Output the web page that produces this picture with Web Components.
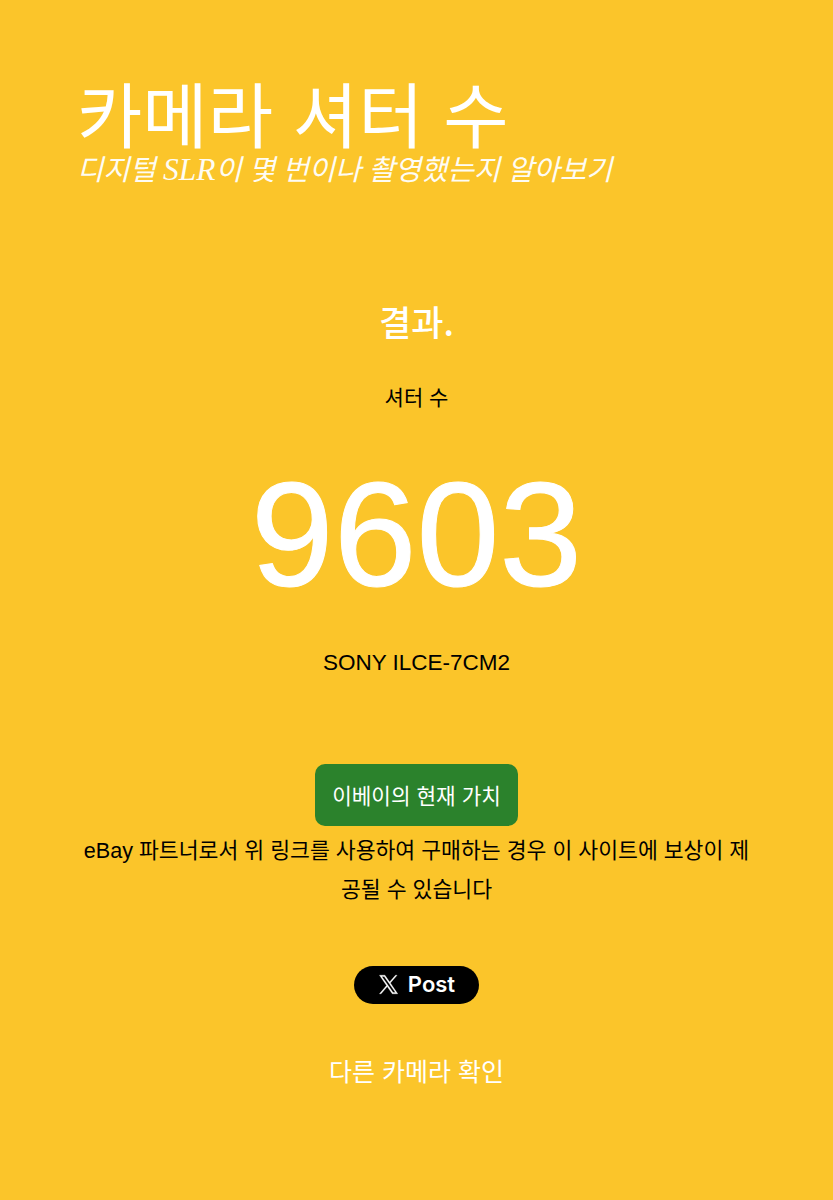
<!DOCTYPE html>
<html lang="ko">
<head>
<meta charset="utf-8">
<title>카메라 셔터 수</title>
<style>
  html, body { margin: 0; background: #fbc52a; }
  body { font-family: "Liberation Sans", "Noto Sans CJK KR", sans-serif; }
  .latin { font-size: 1.1em; }
</style>
</head>
<body>
<shutter-page>
  <site-header slot="header">
    <span slot="title">카메라 셔터 수</span>
    <span slot="tagline">디지털 <i class="latin">SLR</i>이 몇 번이나 촬영했는지 알아보기</span>
  </site-header>
  <result-panel count="9603" model="SONY ILCE-7CM2"></result-panel>
  <ebay-offer href="#">eBay 파트너로서 위 링크를 사용하여 구매하는 경우 이 사이트에 보상이 제공될 수 있습니다</ebay-offer>
  <post-button></post-button>
  <again-link>다른 카메라 확인</again-link>
</shutter-page>

<script>
class ShutterPage extends HTMLElement {
  constructor() {
    super();
    this.attachShadow({ mode: 'open' }).innerHTML = `
      <style>
        :host { display: block; height: 1200px; box-sizing: border-box; padding: 71px 78px 0; color: #000; overflow: hidden; }
      </style>
      <slot name="header"></slot>
      <slot></slot>`;
  }
}

class SiteHeader extends HTMLElement {
  constructor() {
    super();
    this.attachShadow({ mode: 'open' }).innerHTML = `
      <style>
        :host { display: block; color: #fff; }
        .title { font: 400 71px/80px "Noto Sans CJK KR", sans-serif; white-space: nowrap; margin-left: -1px; }
        .tagline { font: italic 400 28.6px/26px "Liberation Serif", "Noto Sans CJK KR", serif; white-space: nowrap; margin: 6px 0 0 -1px; opacity: .95; }
      </style>
      <div class="title"><slot name="title"></slot></div>
      <div class="tagline"><slot name="tagline"></slot></div>`;
  }
}

class ResultPanel extends HTMLElement {
  constructor() {
    super();
    this.attachShadow({ mode: 'open' }).innerHTML = `
      <style>
        :host { display: flex; flex-direction: column; align-items: center; text-align: center; margin-top: 111px; }
        h2 { margin: 0; font: 500 35px/52px "Noto Sans CJK KR", sans-serif; color: #fff; }
        .label { margin-top: 33px; font: 400 21px/32px "Noto Sans CJK KR", sans-serif; }
        .count { margin-top: 40px; font: 400 149px/166px "Liberation Sans", sans-serif; color: #fff; -webkit-text-stroke: 1px #fff; }
        .model { margin-top: 30px; font: 400 22.5px/30px "Liberation Sans", sans-serif; }
      </style>
      <h2>결과.</h2>
      <div class="label">셔터 수</div>
      <div class="count"></div>
      <div class="model"></div>`;
  }
  connectedCallback() {
    this.shadowRoot.querySelector('.count').textContent = this.getAttribute('count');
    this.shadowRoot.querySelector('.model').textContent = this.getAttribute('model');
  }
}

class EbayOffer extends HTMLElement {
  constructor() {
    super();
    this.attachShadow({ mode: 'open' }).innerHTML = `
      <style>
        :host { display: flex; flex-direction: column; align-items: center; text-align: center; margin-top: 86px; }
        a { display: block; background: #2b822c; color: #fff; text-decoration: none; border-radius: 10px; padding: 0 17px; font: 400 21.3px/62px "Noto Sans CJK KR", sans-serif; }
        p { margin: 6px 0 0; font: 400 21.6px/38.5px "Liberation Sans", "Noto Sans CJK KR", sans-serif; }
      </style>
      <a part="button">이베이의 현재 가치</a>
      <p><slot></slot></p>`;
  }
  connectedCallback() {
    this.shadowRoot.querySelector('a').href = this.getAttribute('href') || '#';
  }
}

class PostButton extends HTMLElement {
  constructor() {
    super();
    this.attachShadow({ mode: 'open' }).innerHTML = `
      <style>
        :host { display: flex; justify-content: center; margin-top: 57px; }
        .btn { display: flex; align-items: center; justify-content: center; gap: 9px; width: 125px; height: 37.5px; background: #000; color: #fff; border-radius: 19px; font: 600 22px/37px Inter, "Liberation Sans", sans-serif; }
        svg { width: 21px; height: 21px; fill: #fff; stroke: #fff; stroke-width: .4; }
      </style>
      <div class="btn">
        <svg viewBox="0 0 24 24"><path d="M14.1 10.3 21.8 1.4h-1.8l-6.7 7.8L7.9 1.4H1.7l8.1 11.8-8.1 9.4h1.8l7.1-8.2 5.7 8.2h6.2L14.1 10.3zm-2.5 2.9-.8-1.2L4.3 2.8h2.8l5.3 7.5.8 1.2 6.8 9.7h-2.8l-5.6-8z"/></svg>
        <span>Post</span>
      </div>`;
  }
}

class AgainLink extends HTMLElement {
  constructor() {
    super();
    this.attachShadow({ mode: 'open' }).innerHTML = `
      <style>
        :host { display: block; text-align: center; margin-top: 46px; color: #fff; font: 400 25px/40px "Noto Sans CJK KR", sans-serif; }
      </style>
      <slot></slot>`;
  }
}

customElements.define('shutter-page', ShutterPage);
customElements.define('site-header', SiteHeader);
customElements.define('result-panel', ResultPanel);
customElements.define('ebay-offer', EbayOffer);
customElements.define('post-button', PostButton);
customElements.define('again-link', AgainLink);
</script>
</body>
</html>
